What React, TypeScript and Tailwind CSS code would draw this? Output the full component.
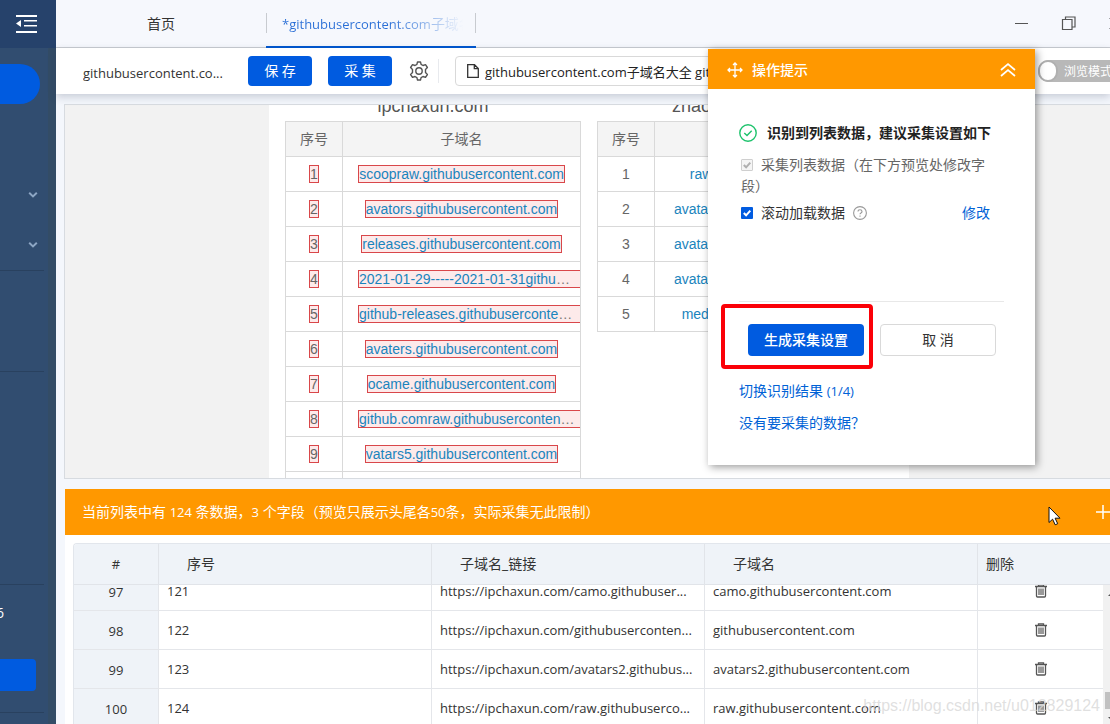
import type { ReactNode } from "react";

const latin = "text-[13px]";

const primaryRows = [
  { text: "scoopraw.githubusercontent.com" },
  { text: "avators.githubusercontent.com" },
  { text: "releases.githubusercontent.com" },
  { text: "2021-01-29-----2021-01-31githu", cut: true },
  { text: "github-releases.githubuserconte", cut: true },
  { text: "avaters.githubusercontent.com" },
  { text: "ocame.githubusercontent.com" },
  { text: "github.comraw.githubuserconten", cut: true },
  { text: "vatars5.githubusercontent.com" },
  { text: "" },
];

const secondaryRows = [
  "raw.githubusercontent.com",
  "avatars1.githubusercontent.com",
  "avatars2.githubusercontent.com",
  "avatars3.githubusercontent.com",
  "media.githubusercontent.com",
];

const previewRows = [
  { id: 97, no: 121, link: "https://ipchaxun.com/camo.githubuser...", name: "camo.githubusercontent.com" },
  { id: 98, no: 122, link: "https://ipchaxun.com/githubuserconten...", name: "githubusercontent.com" },
  { id: 99, no: 123, link: "https://ipchaxun.com/avatars2.githubus...", name: "avatars2.githubusercontent.com" },
  { id: 100, no: 124, link: "https://ipchaxun.com/raw.githubuserco...", name: "raw.githubusercontent.com" },
];

function Chevron() {
  return (
    <svg width="10" height="8" viewBox="0 0 10 8" fill="none" stroke="#8da6c4" strokeWidth="2">
      <path d="M1.2 1.8 L5 5.4 L8.8 1.8" />
    </svg>
  );
}

function Sidebar() {
  return (
    <nav className="flex w-14 shrink-0 flex-col border-r-8 border-[#334c66] bg-[#314d70]" aria-label="侧边栏">
      <div className="-mr-2 flex h-12 shrink-0 items-center bg-[#26426b] pl-4">
        <button type="button" aria-label="收起" className="h-5 w-5">
          <svg width="21" height="20" viewBox="0 0 21 20" fill="#fff">
            <path d="M0 1h21v2H0zM8 6h13v1.6H8zM8 11h13v1.6H8zM0 17h21v2H0zM0 9.5L5 6v7z" />
          </svg>
        </button>
      </div>
      <button type="button" aria-label="新建任务" className="mt-4 h-10 w-10 shrink-0 rounded-r-full bg-[#005be0]" />
      <button type="button" aria-label="展开任务" className="mt-[75px] flex h-8 items-center pl-7"><Chevron /></button>
      <button type="button" aria-label="展开工具" className="mt-[18px] flex h-8 items-center pl-7"><Chevron /></button>
      <div className="mr-1 mt-[9px] border-t border-[#29415f]" />
      <div className="mr-1 mt-[100px] border-t border-[#29415f]" />
      <div className="mr-1 mt-[212px] border-t border-[#29415f]" />
      <div className="mt-4 flex h-6 w-1 shrink-0 items-center justify-end overflow-hidden text-[14px] text-white">6</div>
      <button type="button" aria-label="升级" className="mt-[34px] h-8 w-9 shrink-0 rounded-r bg-[#005be0]" />
      <div className="mr-1 mt-[21px] border-t border-[#29415f]" />
    </nav>
  );
}

function TabBar() {
  return (
    <header className="flex h-12 shrink-0 border-b border-[#c9ccd1] bg-[#f6f8fd]">
      <a href="#home" className="flex w-[210px] items-center justify-center text-[#333]">首页</a>
      <a href="#task" className="-mb-px flex w-[210px] items-center border-b-2 border-[#0057d0]">
        <span className="flex h-5 w-full items-center overflow-hidden whitespace-nowrap border-x border-[#c8cbd0] pl-[15px]">
          <span className="bg-gradient-to-r from-[#2a6fd6] from-55% to-transparent to-95% bg-clip-text pt-0.5 text-transparent">
            <span className={latin}>*githubusercontent.com</span>子域名
          </span>
        </span>
      </a>
      <div className="ml-auto -mr-[15px] flex items-center gap-8 pb-0.5 text-[#555]">
        <button type="button" aria-label="最小化" className="h-4 w-4">
          <svg width="16" height="16" viewBox="0 0 16 16" stroke="currentColor"><path d="M2 8.5h13" /></svg>
        </button>
        <button type="button" aria-label="还原" className="h-4 w-4">
          <svg width="16" height="16" viewBox="0 0 16 16" fill="none" stroke="currentColor">
            <path d="M1.5 4.5h9.500v10h-9.500zM4.500 4.500v-2.500h9.500v10h-3" strokeWidth="1.2" />
          </svg>
        </button>
        <button type="button" aria-label="关闭" className="h-4 w-4">
          <svg width="16" height="16" viewBox="0 0 16 16" stroke="currentColor"><path d="M0.500 3l11 11M11.500 3l-11 11" /></svg>
        </button>
      </div>
    </header>
  );
}

function Gear() {
  return (
    <svg width="20" height="20" viewBox="0 0 20 20" fill="none" stroke="#555" strokeWidth="1.4" strokeLinejoin="round">
      <path d="M8.500 1h3l.6 2.400 1.900 1.100 2.500-.9 1.900 2.900-1.900 1.900v3.200l1.900 1.900-1.900 2.900-2.500-.9-1.900 1.100-.6 2.400h-3l-.6-2.400-1.900-1.100-2.500.9-1.900-2.900 1.900-1.900V8.400L1.600 6.500l1.900-2.900 2.500.9 1.900-1.100z" />
      <circle cx="10" cy="10" r="3.200" />
    </svg>
  );
}

function Toolbar() {
  return (
    <div className="z-10 flex h-[46px] shrink-0 items-center bg-white pl-[27px] shadow-[0_3px_8px_rgba(40,50,80,0.22)]">
      <span className={`w-[149px] truncate pt-1 text-[#333] ${latin}`}>githubusercontent.co...</span>
      <button type="button" className="ml-4 h-[30px] w-16 shrink-0 rounded bg-[#005be0] text-white">保 存</button>
      <button type="button" className="ml-4 h-[30px] w-16 shrink-0 rounded bg-[#005be0] text-white">采 集</button>
      <button type="button" aria-label="设置" className="ml-[17px] shrink-0"><Gear /></button>
      <div className="ml-[9px] h-6 border-l border-[#e8eaee]" />
      <label className="ml-4 flex h-[30px] flex-1 items-center gap-1.5 rounded border border-[#d9d9d9] bg-white pl-[11px]">
        <svg width="12" height="14" viewBox="0 0 12 14" fill="none" stroke="#333" strokeWidth="1.3" className="shrink-0" aria-label="网页">
          <path d="M.7.7h6.800l3.800 3.800v8.800H.7zM7.300.7v4h4" />
        </svg>
        <input
          type="text"
          aria-label="当前网页"
          defaultValue="githubusercontent.com子域名大全 githubusercontent.com"
          className={`min-w-0 flex-1 bg-transparent pt-0.5 text-[#222] outline-none ${latin}`}
        />
      </label>
      <button
        type="button"
        role="switch"
        aria-checked="false"
        className="-mr-[10px] ml-[103px] flex h-[22px] w-[82px] shrink-0 items-center gap-1.5 whitespace-nowrap rounded-full bg-[#b8b8b8] text-[12px] text-white"
      >
        <span className="h-[22px] w-5 shrink-0 rounded-full border-2 border-[#b0b0b0] bg-white" />
        <span className="pt-0.5">浏览模式</span>
      </button>
    </div>
  );
}

function SiteTable({ title, children }: { title: string; children: ReactNode }) {
  return (
    <section className="w-[296px] shrink-0">
      <h2 className="-mt-[9px] mb-[5px] text-center text-[18px] leading-5 text-[#555]">{title}</h2>
      <table className="w-full table-fixed border-collapse text-center text-[14px] text-[#666]">
        <thead>
          <tr className="h-[35px] bg-[#f4f4f4]">
            <th className="w-[57px] border border-[#d9d9d9] font-normal">序号</th>
            <th className="border border-[#d9d9d9] font-normal">子域名</th>
          </tr>
        </thead>
        <tbody>{children}</tbody>
      </table>
    </section>
  );
}

function BrowserView() {
  return (
    <div className="-mr-1 flex h-[375px] shrink-0 justify-center overflow-hidden border border-[#d7dbe0] bg-[#f2f2f2]">
      <div className="flex w-[640px] items-start gap-4 bg-white px-4 font-['Liberation_Sans','Noto_Sans_CJK_SC',sans-serif]">
        <SiteTable title="ipchaxun.com">
          {primaryRows.map((row, i) => (
            <tr key={i} className="h-[35px]">
              <td className="border border-[#d9d9d9]">
                <span className="inline-block border border-[#d9474a] bg-[#fdeaea] leading-4">{i + 1}</span>
              </td>
              <td className={row.cut ? "border border-[#d9d9d9] pl-[15px]" : "border border-[#d9d9d9]"}>
                {row.text && (
                  <a
                    href="#site"
                    className={
                      row.cut
                        ? "block overflow-hidden whitespace-nowrap border-y border-l border-[#d9474a] bg-[#fdeaea] text-left leading-4 text-[#1a84bd]"
                        : "inline-block whitespace-nowrap border border-[#d9474a] bg-[#fdeaea] leading-4 text-[#1a84bd]"
                    }
                  >
                    {row.text}
                    {row.cut && <span className="text-[#777]">…</span>}
                  </a>
                )}
              </td>
            </tr>
          ))}
        </SiteTable>
        <SiteTable title="zhaodomains.com">
          {secondaryRows.map((name, i) => (
            <tr key={name} className="h-[35px]">
              <td className="border border-[#d9d9d9]">{i + 1}</td>
              <td className="border border-[#d9d9d9]"><a href="#site" className="text-[#1a84bd]">{name}</a></td>
            </tr>
          ))}
        </SiteTable>
      </div>
    </div>
  );
}

function Trash() {
  return (
    <svg width="12" height="14" viewBox="0 0 12 14" fill="none" stroke="#555">
      <path d="M0 2.500h12M3.500 2.500V.9h5v1.600" strokeWidth="1.300" />
      <path d="M1.500 3v9q0 1 1 1h7q1 0 1-1V3" strokeWidth="1.300" />
      <path d="M3 4.500h6v6.500H3z" fill="#999" stroke="none" />
    </svg>
  );
}

function Columns() {
  return (
    <colgroup>
      <col className="w-[85px]" />
      <col className="w-[273px]" />
      <col className="w-[273px]" />
      <col className="w-[273px]" />
      <col />
    </colgroup>
  );
}

function Preview() {
  return (
    <section className="ml-px flex min-h-0 flex-1 flex-col bg-white">
      <div className="flex h-[46px] shrink-0 items-center justify-between bg-[#ff9800] pl-[17px] text-white">
        <p>
          当前列表中有 <span className={latin}>124</span> 条数据，<span className={latin}>3</span> 个字段（预览只展示头尾各<span className={latin}>50</span>条，实际采集无此限制）
        </p>
        <button type="button" aria-label="添加字段" className="h-4 w-[14px] overflow-hidden">
          <svg width="16" height="16" viewBox="0 0 16 16" stroke="#fff" strokeWidth="1.500"><path d="M0 8h16M7 1v14" /></svg>
        </button>
      </div>
      <div className="ml-2 mt-2 flex min-h-0 flex-1 flex-col overflow-hidden rounded-tl border-l border-t border-[#e2e6ec] text-[#333]">
        <table className="z-10 w-full table-fixed border-separate border-spacing-0 bg-[#eff3f8] text-left">
          <Columns />
          <thead>
            <tr className="h-[41px]">
              <th className="border-b border-r border-[#e1e4e9] text-center text-[13px] font-normal">#</th>
              <th className="border-b border-r border-[#e1e4e9] pl-7 font-normal">序号</th>
              <th className="border-b border-r border-[#e1e4e9] pl-7 font-normal">子域名_链接</th>
              <th className="border-b border-r border-[#e1e4e9] pl-7 font-normal">子域名</th>
              <th className="border-b border-[#e1e4e9] pl-2 font-normal">删除</th>
            </tr>
          </thead>
        </table>
        <div className="flex min-h-0 flex-1 overflow-hidden">
          <div className="min-w-0 flex-1">
            <table className="-mt-[13px] w-full table-fixed border-separate border-spacing-0">
              <Columns />
              <tbody className="text-[13px]">
                {previewRows.map((row) => (
                  <tr key={row.id} className="h-[39px]">
                    <td className="border-b border-r border-[#e4e6ea] bg-[#eff3f8] pt-0.5 text-center">{row.id}</td>
                    <td className="border-b border-r border-[#e4e6ea] pl-2">{row.no}</td>
                    <td className="whitespace-nowrap border-b border-r border-[#e4e6ea] pl-2">{row.link}</td>
                    <td className="whitespace-nowrap border-b border-r border-[#e4e6ea] pl-2">{row.name}</td>
                    <td className="border-b border-[#e4e6ea]">
                      <button type="button" aria-label={`删除 ${row.id}`} className="mx-auto flex"><Trash /></button>
                    </td>
                  </tr>
                ))}
              </tbody>
            </table>
          </div>
          <div className="flex w-[7px] shrink-0 flex-col items-end overflow-hidden bg-[#f1f1f1]">
            <svg width="2" height="3" viewBox="0 0 2 3" className="mt-2" fill="#555"><path d="M0 3L2 1v2z" /></svg>
            <div className="mb-2 mt-auto h-[17px] w-[5px] shrink-0 bg-[#c1c1c1]" />
            <svg width="2" height="3" viewBox="0 0 2 3" className="mb-1 shrink-0" fill="#555"><path d="M0 0h2v2z" /></svg>
          </div>
        </div>
      </div>
    </section>
  );
}

function Checkbox({ id, disabled }: { id: string; disabled?: boolean }) {
  return (
    <span className="mr-2 inline-grid h-3 w-3 items-center align-[-1px]">
      <input
        id={id}
        type="checkbox"
        defaultChecked
        disabled={disabled}
        className="col-start-1 row-start-1 h-3 w-3 appearance-none rounded-[1px] bg-[#005be0] disabled:border disabled:border-[#cfcfcf] disabled:bg-[#f5f5f5]"
      />
      <svg width="12" height="12" viewBox="0 0 12 12" fill="none" stroke={disabled ? "#b0b0b0" : "#fff"} strokeWidth="2" className="pointer-events-none col-start-1 row-start-1">
        <path d="M2.800 6l2.300 2.300L9.300 3.600" />
      </svg>
    </span>
  );
}

function TipsPanel() {
  return (
    <aside className="absolute right-[75px] top-[49px] z-20 w-[327px] bg-white pb-8 text-[#333] shadow-[2px_2px_8px_rgba(0,0,0,0.4)]">
      <div className="flex h-10 items-center bg-[#ff9800] px-[19px] pt-0.5 text-white">
        <svg width="16" height="16" viewBox="0 0 16 16" fill="none" stroke="#fff" strokeWidth="1.300">
          <path d="M8 1v14M1 8h14M6 3l2-2 2 2M6 13l2 2 2-2M3 6L1 8l2 2M13 6l2 2-2 2" />
        </svg>
        <h3 className="ml-[9px] flex-1 font-medium">操作提示</h3>
        <button type="button" aria-label="收起提示">
          <svg width="16" height="16" viewBox="0 0 16 16" fill="none" stroke="#fff" strokeWidth="1.700">
            <path d="M1 8l7-6 7 6M1 14l7-6 7 6" />
          </svg>
        </button>
      </div>
      <div className="px-[31px] pt-[33px]">
        <div className="flex h-[21px] items-center gap-2.5 whitespace-nowrap font-bold text-[#222]">
          <svg width="18" height="18" viewBox="0 0 18 18" fill="none" stroke="#1fc36d" strokeWidth="1.400" className="shrink-0">
            <circle cx="9" cy="9" r="8.200" /><path d="M5.300 9l2.700 2.600 4.700-4.900" />
          </svg>
          识别到列表数据，建议采集设置如下
        </div>
        <div className="mt-[11px] pl-0.5 leading-[21px]">
          <label htmlFor="collect-list" className="block text-[#666]">
            <Checkbox id="collect-list" disabled />采集列表数据（在下方预览处修改字段）
          </label>
          <div className="mt-[6px] flex items-center">
            <label htmlFor="scroll-load"><Checkbox id="scroll-load" />滚动加载数据</label>
            <svg width="14" height="14" viewBox="0 0 14 14" fill="none" stroke="#999" strokeWidth="1.100" className="ml-2" aria-label="帮助">
              <circle cx="7" cy="7" r="6.400" /><path d="M5 5.600q0-1.900 2-1.900t2 1.700q0 1-1 1.500t-1 1.300M7 9.500v1.200" />
            </svg>
            <a href="#edit" className="ml-auto mr-[14px] text-[#0062d6]">修改</a>
          </div>
        </div>
        <div className="mt-[78px] border-t border-[#e8e8e8]" />
        <div className="mt-[22px] flex gap-4 pl-[9px]">
          <div className="relative">
            <button type="button" className="h-8 w-[116px] rounded bg-[#005be0] font-medium text-white">生成采集设置</button>
            <div className="pointer-events-none absolute -bottom-[13px] -left-[27px] -right-[9px] -top-[20px] rounded-sm border-4 border-[#fb0007]" />
          </div>
          <button type="button" className="h-8 w-[116px] rounded border border-[#d9d9d9] bg-white">取 消</button>
        </div>
        <a href="#switch" className="mt-6 block leading-[21px] text-[#0062d6]">切换识别结果 <span className={latin}>(1/4)</span></a>
        <a href="#missing" className="mt-[10px] block leading-[21px] text-[#0062d6]">没有要采集的数据？</a>
      </div>
    </aside>
  );
}

export default function App() {
  return (
    <div className="relative flex h-screen overflow-hidden bg-[#f4f7fc] font-['Open_Sans','Noto_Sans_CJK_SC',sans-serif] text-[14px] leading-5">
      <Sidebar />
      <div className="flex min-w-0 flex-1 flex-col">
        <TabBar />
        <Toolbar />
        <main className="flex min-h-0 flex-1 flex-col gap-[10px] pl-2 pt-[10px]">
          <BrowserView />
          <Preview />
        </main>
      </div>
      <TipsPanel />
      <svg width="14" height="20" viewBox="0 0 14 20" className="absolute right-12 top-[506px] z-30" fill="#fff" stroke="#111" strokeWidth="1" aria-hidden="true">
        <path d="M1 1v15.500l3.600-3.300 2.600 5.600 2.500-1.100-2.600-5.500H12z" />
      </svg>
      <div className="pointer-events-none absolute bottom-2 right-[10px] z-30 font-['Liberation_Sans',sans-serif] text-[16px] text-[#d8d8d8]/80">
        https://blog.csdn.net/u012829124
      </div>
    </div>
  );
}
